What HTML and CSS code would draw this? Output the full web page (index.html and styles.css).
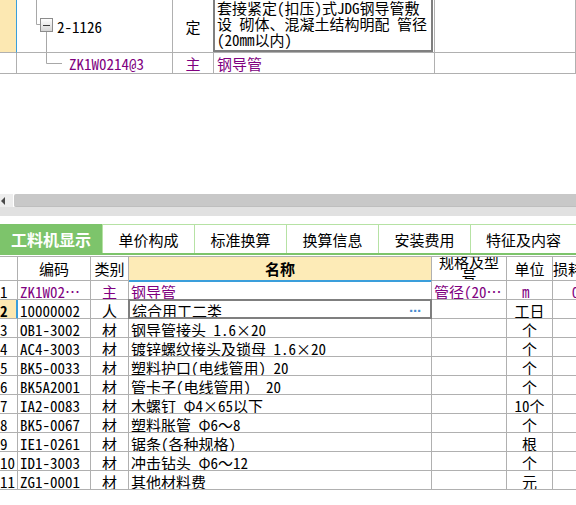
FILE: index.html
```html
<!DOCTYPE html>
<html lang="zh-CN">
<head>
<meta charset="utf-8">
<title>工料机显示</title>
<link rel="stylesheet" href="styles.css">
</head>
<body>
<div class="page">
  <div class="tree-grid">
    <div class="cell rownum selected"></div>
    <div class="cell code">
      <svg class="tree" width="40" height="52" viewBox="0 0 40 52">
        <defs>
          <linearGradient id="bx" x1="0" y1="0" x2="0" y2="1">
            <stop offset="0" stop-color="#ffffff"/>
            <stop offset="1" stop-color="#d4d4d4"/>
          </linearGradient>
        </defs>
        <path d="M19.5 0V24.5H23" fill="none" stroke="#a8a8a8"/>
        <rect x="23.5" y="18.5" width="12" height="13" fill="url(#bx)" stroke="#8c8c8c"/>
        <path d="M26 25.5H33" stroke="#3a3a3a"/>
        <path d="M29.5 32V52" stroke="#a8a8a8"/>
      </svg>
      <span>2-1126</span>
    </div>
    <div class="cell center">定</div>
    <div class="cell block"><div class="edit-box multiline">套接紧定(扣压)式JDG钢导管敷<br>设 砌体、混凝土结构明配 管径<br>(20mm以内)</div></div>
    <div class="cell"></div>

    <div class="cell rownum"></div>
    <div class="cell code">
      <svg class="tree" width="52" height="20" viewBox="0 0 52 20">
        <path d="M29.5 0V10.5H45" fill="none" stroke="#a8a8a8"/>
      </svg>
      <span class="main">ZK1W0214@3</span>
    </div>
    <div class="cell center main">主</div>
    <div class="cell pad main">钢导管</div>
    <div class="cell"></div>
  </div>

  <div class="hscroll">
    <div class="hs-bar">
      <div class="hs-btn">
        <svg width="5" height="8" viewBox="0 0 5 8"><path d="M4 0V8L0 4Z" fill="#4a4a4a"/></svg>
      </div>
      <div class="hs-thumb"></div>
    </div>
    <div class="hs-gutter"></div>
  </div>

  <div class="tabs">
    <div class="tab active">工料机显示</div>
    <div class="tab">单价构成</div>
    <div class="tab">标准换算</div>
    <div class="tab">换算信息</div>
    <div class="tab">安装费用</div>
    <div class="tab last">特征及内容</div>
  </div>

  <div class="data-grid">
    <div class="cell hd"></div>
    <div class="cell hd">编码</div>
    <div class="cell hd">类别</div>
    <div class="cell hd name-hd">名称</div>
    <div class="cell hd"><span class="wrap">规格及型号</span></div>
    <div class="cell hd">单位</div>
    <div class="cell hd">损耗率</div>

    <div class="cell d num">1</div>
    <div class="cell d code-d main">ZK1W02…</div>
    <div class="cell d c main">主</div>
    <div class="cell d t main">钢导管</div>
    <div class="cell d t main">管径(20…</div>
    <div class="cell d c main">m&nbsp;</div>
    <div class="cell d c main">0</div>

    <div class="cell d num sel">2</div>
    <div class="cell d code-d">10000002</div>
    <div class="cell d c">人</div>
    <div class="cell d edit"><span>综合用工二类</span><span class="more">···</span></div>
    <div class="cell d t"></div>
    <div class="cell d c">工日</div>
    <div class="cell d c"></div>

    <div class="cell d num">3</div>
    <div class="cell d code-d">OB1-3002</div>
    <div class="cell d c">材</div>
    <div class="cell d t">钢导管接头 1.6×20</div>
    <div class="cell d t"></div>
    <div class="cell d c">个</div>
    <div class="cell d c"></div>

    <div class="cell d num">4</div>
    <div class="cell d code-d">AC4-3003</div>
    <div class="cell d c">材</div>
    <div class="cell d t">镀锌螺纹接头及锁母 1.6×20</div>
    <div class="cell d t"></div>
    <div class="cell d c">个</div>
    <div class="cell d c"></div>

    <div class="cell d num">5</div>
    <div class="cell d code-d">BK5-0033</div>
    <div class="cell d c">材</div>
    <div class="cell d t">塑料护口(电线管用) 20</div>
    <div class="cell d t"></div>
    <div class="cell d c">个</div>
    <div class="cell d c"></div>

    <div class="cell d num">6</div>
    <div class="cell d code-d">BK5A2001</div>
    <div class="cell d c">材</div>
    <div class="cell d t">管卡子(电线管用)&nbsp; 20</div>
    <div class="cell d t"></div>
    <div class="cell d c">个</div>
    <div class="cell d c"></div>

    <div class="cell d num">7</div>
    <div class="cell d code-d">IA2-0083</div>
    <div class="cell d c">材</div>
    <div class="cell d t">木螺钉 Φ4×65以下</div>
    <div class="cell d t"></div>
    <div class="cell d c">10个</div>
    <div class="cell d c"></div>

    <div class="cell d num">8</div>
    <div class="cell d code-d">BK5-0067</div>
    <div class="cell d c">材</div>
    <div class="cell d t">塑料胀管 Φ6～8</div>
    <div class="cell d t"></div>
    <div class="cell d c">个</div>
    <div class="cell d c"></div>

    <div class="cell d num">9</div>
    <div class="cell d code-d">IE1-0261</div>
    <div class="cell d c">材</div>
    <div class="cell d t">锯条(各种规格)</div>
    <div class="cell d t"></div>
    <div class="cell d c">根</div>
    <div class="cell d c"></div>

    <div class="cell d num">10</div>
    <div class="cell d code-d">ID1-3003</div>
    <div class="cell d c">材</div>
    <div class="cell d t">冲击钻头 Φ6～12</div>
    <div class="cell d t"></div>
    <div class="cell d c">个</div>
    <div class="cell d c"></div>

    <div class="cell d num">11</div>
    <div class="cell d code-d">ZG1-0001</div>
    <div class="cell d c">材</div>
    <div class="cell d t">其他材料费</div>
    <div class="cell d t"></div>
    <div class="cell d c">元</div>
    <div class="cell d c"></div>
  </div>
</div>
</body>
</html>
```

FILE: styles.css
```css
* {
  box-sizing: border-box;
}

html,
body {
  margin: 0;
  padding: 0;
  background: #ffffff;
}

body {
  width: 576px;
  height: 505px;
  overflow: hidden;
  font-family: "Noto Sans Mono CJK SC", "Noto Sans CJK SC", "DejaVu Sans Mono", monospace;
  font-size: 15px;
  color: #000000;
}

.page {
  width: 576px;
  height: 505px;
  overflow: hidden;
  display: flex;
  flex-direction: column;
}

/* generic grid cell */
.cell {
  border-right: 1px solid #b0b0b0;
  border-bottom: 1px solid #b0b0b0;
  white-space: nowrap;
  overflow: hidden;
  min-width: 0;
}

.main {
  color: #800080;
}

/* ---------- top tree grid ---------- */
.tree-grid {
  flex: none;
  display: grid;
  grid-template-columns: 17px 156px 41px 221px 141px;
  grid-template-rows: 53px 21px;
}

.tree-grid .cell {
  display: flex;
  align-items: center;
}

.tree-grid .rownum.selected {
  background: #fce8b2;
  border-right-color: #3a9edb;
}

.tree-grid .center {
  justify-content: center;
}

.tree-grid .pad {
  padding-left: 3px;
}

.tree {
  display: block;
  flex: none;
}

.tree-grid .cell.block {
  display: block;
  overflow: visible;
}

.edit-box {
  height: 52px;
  margin-left: -1px;
  margin-right: 1px;
  border: 2px solid #7f7f7f;
  border-top: none;
  background: #ffffff;
}

.multiline {
  padding-left: 2px;
  line-height: 16px;
  white-space: nowrap;
}

/* ---------- horizontal scrollbar ---------- */
.hscroll {
  flex: none;
  margin-top: 120px;
}

.hs-bar {
  display: flex;
  height: 13px;
}

.hs-btn {
  width: 13px;
  background: #ededed;
  display: flex;
  align-items: center;
  padding-left: 1px;
}

.hs-btn svg {
  display: block;
}

.hs-thumb {
  flex: 1;
  margin-left: 1px;
  background: #c8c8c8;
  border-radius: 2px 0 0 2px;
  border-bottom: 1px solid #bebebe;
}

.hs-gutter {
  height: 9px;
  background: #e1e1e1;
}

/* ---------- tabs ---------- */
.tabs {
  flex: none;
  margin-top: 8px;
  height: 31px;
  display: flex;
  border-bottom: 2px solid #7dc46b;
  font-family: "Noto Sans CJK SC", "Noto Sans", sans-serif;
  font-size: 15px;
}

.tab {
  width: 92px;
  border-top: 1px solid #b6e2a4;
  border-left: 1px solid #b6e2a4;
  display: flex;
  align-items: center;
  justify-content: center;
}

.tab.active {
  width: 102px;
  border: none;
  background: #7dc46b;
  color: #ffffff;
  font-weight: bold;
  font-size: 16px;
}

.tab.last {
  flex: 1;
}

/* ---------- data grid ---------- */
.data-grid {
  flex: none;
  margin-top: 1px;
  width: 599px;
  display: grid;
  grid-template-columns: 18px 73px 38px 303px 75px 46px 46px;
  grid-template-rows: 24px;
  grid-auto-rows: 19px;
  border-top: 1px solid #b0b0b0;
}

.hd {
  display: flex;
  align-items: center;
  justify-content: center;
}

.name-hd {
  background: #fdebb7;
  font-weight: bold;
  border-bottom-color: #3a9edb;
  box-shadow: 0 1px 0 #3a9edb;
}

.wrap {
  display: block;
  width: 100%;
  white-space: normal;
  text-align: center;
  line-height: 14px;
}

.d {
  padding-top: 3px;
  line-height: 15px;
}

.num {
  padding-left: 0;
}

.num.sel {
  background: #fce8b2;
  font-weight: bold;
  border-right-color: #3a9edb;
  box-shadow: inset -1px 0 0 #3a9edb;
}

.code-d {
  padding-left: 2px;
}

.c {
  text-align: center;
}

.t {
  padding-left: 2px;
}

.edit {
  margin: -1px 0 0 -1px;
  border: 2px solid #7f7f7f;
  padding: 2px 9px 0 2px;
  display: flex;
  justify-content: space-between;
  background: #ffffff;
}

.more {
  color: #4a8ed0;
  font-family: "Liberation Sans", sans-serif;
  font-size: 15px;
  font-weight: bold;
  letter-spacing: -1px;
}
```
